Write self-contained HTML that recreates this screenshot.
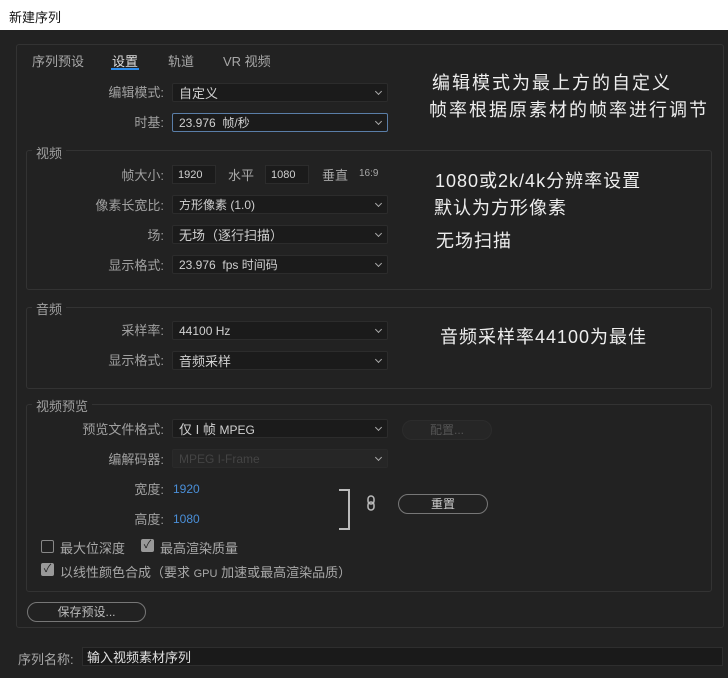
<!DOCTYPE html>
<html><head><meta charset="utf-8"><style>
body{margin:0;width:728px;height:678px;background:#222;overflow:hidden;position:relative;font-family:"Liberation Sans","Noto Sans CJK SC",sans-serif;font-size:12px;color:#a8a8a8}
.a{position:absolute}
.title{left:0;top:0;width:728px;height:30px;background:#fff;color:#111;font-size:13px}
.box{border:1px solid #333;border-radius:3px}
.lbl{text-align:right;width:150px;left:14px;color:#a0a0a0;margin-top:-2px}
.dd{left:172px;width:216px;height:19px;background:#1b1b1b;border:1px solid #2c2c2c;border-radius:2px;color:#d0d0d0;line-height:19px;padding-left:6px;box-sizing:border-box;font-size:12px}
.dd:after{content:"";position:absolute;right:6px;top:5px;width:4px;height:4px;border-right:1px solid #aaa;border-bottom:1px solid #aaa;transform:rotate(45deg)}
.tb{left:172px;width:44px;height:19px;background:#1b1b1b;border:1px solid #2c2c2c;color:#d0d0d0;line-height:19px;padding-left:5px;box-sizing:border-box;font-size:11px}
.note{color:#eee;font-size:18px;letter-spacing:2px}
.note2{color:#eee;font-size:18px;letter-spacing:1px}
.sec{color:#a0a0a0;background:#222;padding:0 4px}
.btn{border:1px solid #777;border-radius:10px;text-align:center;color:#bbb;height:18px;line-height:18px}
.cb{width:11px;height:11px;border:1px solid #888;border-radius:2px}
.cbk{width:13px;height:13px;background:#999;border-radius:2px;color:#222;font-size:11px;line-height:13px;text-align:center}
.blue{color:#4a8fd8}
</style></head><body>
<div class="a title"><span class="a" style="left:9px;top:7px">新建序列</span></div>
<div class="a box" style="left:16px;top:44px;width:706px;height:582px"></div>
<span class="a" style="left:32px;top:51px;font-size:13px">序列预设</span>
<span class="a" style="left:112px;top:51px;font-size:13px;color:#ddd">设置</span>
<div class="a" style="left:111px;top:68px;width:28px;height:2px;background:#2d8ceb"></div>
<span class="a" style="left:168px;top:51px;font-size:13px">轨道</span>
<span class="a" style="left:223px;top:51px;font-size:13px">VR 视频</span>
<span class="a lbl" style="top:84px;font-size:13px">编辑模式:</span>
<div class="a dd" style="top:83px;font-size:13px">自定义</div>
<span class="a lbl" style="top:114px;font-size:13px">时基:</span>
<div class="a dd" style="top:113px;border-color:#5a7ea8">23.976 &nbsp;帧/秒</div>
<div class="a note" style="left:432px;top:69px">编辑模式为最上方的自定义</div>
<div class="a note" style="left:429px;top:96px">帧率根据原素材的帧率进行调节</div>

<div class="a box" style="left:26px;top:150px;width:684px;height:138px"></div>
<span class="a sec" style="left:32px;top:143px;font-size:13px">视频</span>
<span class="a lbl" style="top:167px;font-size:13px">帧大小:</span>
<div class="a tb" style="top:165px">1920</div>
<span class="a" style="left:228px;top:165px;font-size:13px">水平</span>
<div class="a tb" style="left:265px;top:165px">1080</div>
<span class="a" style="left:322px;top:165px;font-size:13px">垂直</span>
<span class="a" style="left:359px;top:168px;font-size:10px">16:9</span>
<span class="a lbl" style="top:197px;font-size:13px">像素长宽比:</span>
<div class="a dd" style="top:195px">方形像素 (1.0)</div>
<span class="a lbl" style="top:227px;font-size:13px">场:</span>
<div class="a dd" style="top:225px;font-size:13px">无场（逐行扫描）</div>
<span class="a lbl" style="top:257px;font-size:13px">显示格式:</span>
<div class="a dd" style="top:255px">23.976 &nbsp;fps 时间码</div>
<div class="a note2" style="left:435px;top:167px">1080或2k/4k分辨率设置</div>
<div class="a note2" style="left:434px;top:194px">默认为方形像素</div>
<div class="a note2" style="left:436px;top:227px">无场扫描</div>

<div class="a box" style="left:26px;top:307px;width:684px;height:80px"></div>
<span class="a sec" style="left:32px;top:299px;font-size:13px">音频</span>
<span class="a lbl" style="top:322px;font-size:13px">采样率:</span>
<div class="a dd" style="top:321px">44100 Hz</div>
<span class="a lbl" style="top:352px;font-size:13px">显示格式:</span>
<div class="a dd" style="top:351px;font-size:13px">音频采样</div>
<div class="a note2" style="left:440px;top:323px">音频采样率44100为最佳</div>

<div class="a box" style="left:26px;top:404px;width:684px;height:186px"></div>
<span class="a sec" style="left:32px;top:396px;font-size:13px">视频预览</span>
<span class="a lbl" style="top:421px;font-size:13px">预览文件格式:</span>
<div class="a dd" style="top:419px;font-size:13px">仅 I 帧 <span style="font-size:12px">MPEG</span></div>
<div class="a btn" style="left:402px;top:420px;width:88px;border-color:#2c2c2c;background:#262626;color:#555">配置...</div>
<span class="a lbl" style="top:451px;font-size:13px">编解码器:</span>
<div class="a dd" style="top:449px;background:#262626;color:#444;border-color:#2a2a2a">MPEG I-Frame</div>
<span class="a lbl" style="top:481px;font-size:13px">宽度:</span>
<span class="a blue" style="left:173px;top:482px">1920</span>
<span class="a lbl" style="top:511px;font-size:13px">高度:</span>
<span class="a blue" style="left:173px;top:512px">1080</span>
<div class="a" style="left:339px;top:489px;width:9px;height:37px;border:2px solid #bbb;border-left:none"></div>
<svg class="a" style="left:366px;top:495px" width="10" height="16" viewBox="0 0 10 16"><rect x="2" y="1" width="6" height="8" rx="3" fill="none" stroke="#bbb" stroke-width="1.5"/><rect x="2" y="7" width="6" height="8" rx="3" fill="none" stroke="#bbb" stroke-width="1.5"/></svg>
<div class="a btn" style="left:398px;top:494px;width:88px;color:#ccc">重置</div>
<div class="a cb" style="left:41px;top:540px"></div>
<span class="a" style="left:60px;top:538px;font-size:13px">最大位深度</span>
<div class="a cbk" style="left:141px;top:539px">✓</div>
<span class="a" style="left:160px;top:538px;font-size:13px">最高渲染质量</span>
<div class="a cbk" style="left:41px;top:563px">✓</div>
<span class="a" style="left:60px;top:562px;font-size:13px">以线性颜色合成（要求 <span style="font-size:11px">GPU</span> 加速或最高渲染品质）</span>

<div class="a btn" style="left:27px;top:602px;width:117px">保存预设...</div>
<span class="a" style="left:18px;top:649px;font-size:13px">序列名称:</span>
<div class="a" style="left:82px;top:647px;width:641px;height:19px;background:#1a1a1a;border:1px solid #2e2e2e;color:#e0e0e0;font-size:13px;line-height:19px;padding-left:4px;box-sizing:border-box">输入视频素材序列</div>
</body></html>
